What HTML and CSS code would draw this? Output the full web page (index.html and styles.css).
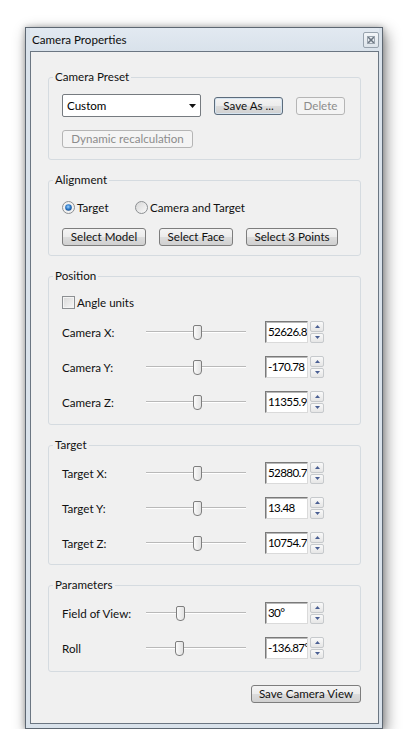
FILE: index.html
```html
<!DOCTYPE html>
<html>
<head>
<meta charset="utf-8">
<title>Camera Properties</title>
<link rel="stylesheet" href="styles.css">
</head>
<body>
<div class="window">
  <div class="titlebar">
    <span class="title">Camera Properties</span>
    <span class="close">
      <svg width="8" height="8" viewBox="0 0 8 8"><path d="M1 1 L7 7 M7 1 L1 7" stroke="#6b7682" stroke-width="1.6" fill="none"/><rect x="0.5" y="0.5" width="7" height="7" fill="none" stroke="#9aa4ae" stroke-width="1"/></svg>
    </span>
  </div>
  <div class="client">
    <fieldset class="group g-preset">
      <legend>Camera Preset</legend>
      <div class="preset-row">
        <div class="combo">
          <span>Custom</span>
          <svg class="combo-arrow" width="7" height="4" viewBox="0 0 7 4"><path d="M0 0 H7 L3.5 4 Z" fill="#111"/></svg>
        </div>
        <button class="btn btn-default w-saveas">Save As ...</button>
        <button class="btn w-delete" disabled>Delete</button>
      </div>
      <button class="btn w-dyn" disabled>Dynamic recalculation</button>
    </fieldset>

    <fieldset class="group g-align">
      <legend>Alignment</legend>
      <div class="radio-row">
        <label class="radio radio-first">
          <svg width="13" height="13" viewBox="0 0 13 13"><defs><radialGradient id="rb" cx="0.45" cy="0.4" r="0.6"><stop offset="0" stop-color="#9fd3ff"/><stop offset="0.6" stop-color="#2a78c8"/><stop offset="1" stop-color="#1b4f8c"/></radialGradient></defs><circle cx="6.5" cy="6.5" r="6" fill="#f1f1f1" stroke="#8c8f92"/><circle cx="6.5" cy="6.5" r="3.3" fill="url(#rb)"/></svg>
          <span>Target</span>
        </label>
        <label class="radio">
          <svg width="13" height="13" viewBox="0 0 13 13"><defs><linearGradient id="ru" x1="0" y1="0" x2="1" y2="1"><stop offset="0" stop-color="#d6d6d6"/><stop offset="1" stop-color="#fbfbfb"/></linearGradient></defs><circle cx="6.5" cy="6.5" r="6" fill="url(#ru)" stroke="#8c8f92"/></svg>
          <span>Camera and Target</span>
        </label>
      </div>
      <div class="btn-row">
        <button class="btn w-model">Select Model</button>
        <button class="btn w-face">Select Face</button>
        <button class="btn w-points">Select 3 Points</button>
      </div>
    </fieldset>

    <fieldset class="group g-pos">
      <legend>Position</legend>
      <label class="check">
        <span class="box"></span>
        <span>Angle units</span>
      </label>
      <div class="rows">
        <div class="row">
          <span class="lbl">Camera X:</span>
          <div class="slider"><span class="track"></span><span class="thumb" style="left:47px"></span></div>
          <div class="num">52626.8</div>
          <div class="spin"><span class="up"><svg width="5" height="3" viewBox="0 0 5 3"><path d="M0 3 L2.5 0 L5 3Z" fill="#4a5f93"/></svg></span><span class="down"><svg width="5" height="3" viewBox="0 0 5 3"><path d="M0 0 L5 0 L2.5 3Z" fill="#4a5f93"/></svg></span></div>
        </div>
        <div class="row">
          <span class="lbl">Camera Y:</span>
          <div class="slider"><span class="track"></span><span class="thumb" style="left:47px"></span></div>
          <div class="num">-170.78</div>
          <div class="spin"><span class="up"><svg width="5" height="3" viewBox="0 0 5 3"><path d="M0 3 L2.5 0 L5 3Z" fill="#4a5f93"/></svg></span><span class="down"><svg width="5" height="3" viewBox="0 0 5 3"><path d="M0 0 L5 0 L2.5 3Z" fill="#4a5f93"/></svg></span></div>
        </div>
        <div class="row">
          <span class="lbl">Camera Z:</span>
          <div class="slider"><span class="track"></span><span class="thumb" style="left:47px"></span></div>
          <div class="num">11355.93</div>
          <div class="spin"><span class="up"><svg width="5" height="3" viewBox="0 0 5 3"><path d="M0 3 L2.5 0 L5 3Z" fill="#4a5f93"/></svg></span><span class="down"><svg width="5" height="3" viewBox="0 0 5 3"><path d="M0 0 L5 0 L2.5 3Z" fill="#4a5f93"/></svg></span></div>
        </div>
      </div>
    </fieldset>

    <fieldset class="group g-target">
      <legend>Target</legend>
      <div class="rows">
        <div class="row">
          <span class="lbl">Target X:</span>
          <div class="slider"><span class="track"></span><span class="thumb" style="left:47px"></span></div>
          <div class="num">52880.71</div>
          <div class="spin"><span class="up"><svg width="5" height="3" viewBox="0 0 5 3"><path d="M0 3 L2.5 0 L5 3Z" fill="#4a5f93"/></svg></span><span class="down"><svg width="5" height="3" viewBox="0 0 5 3"><path d="M0 0 L5 0 L2.5 3Z" fill="#4a5f93"/></svg></span></div>
        </div>
        <div class="row">
          <span class="lbl">Target Y:</span>
          <div class="slider"><span class="track"></span><span class="thumb" style="left:47px"></span></div>
          <div class="num">13.48</div>
          <div class="spin"><span class="up"><svg width="5" height="3" viewBox="0 0 5 3"><path d="M0 3 L2.5 0 L5 3Z" fill="#4a5f93"/></svg></span><span class="down"><svg width="5" height="3" viewBox="0 0 5 3"><path d="M0 0 L5 0 L2.5 3Z" fill="#4a5f93"/></svg></span></div>
        </div>
        <div class="row">
          <span class="lbl">Target Z:</span>
          <div class="slider"><span class="track"></span><span class="thumb" style="left:47px"></span></div>
          <div class="num">10754.75</div>
          <div class="spin"><span class="up"><svg width="5" height="3" viewBox="0 0 5 3"><path d="M0 3 L2.5 0 L5 3Z" fill="#4a5f93"/></svg></span><span class="down"><svg width="5" height="3" viewBox="0 0 5 3"><path d="M0 0 L5 0 L2.5 3Z" fill="#4a5f93"/></svg></span></div>
        </div>
      </div>
    </fieldset>

    <fieldset class="group g-params">
      <legend>Parameters</legend>
      <div class="rows">
        <div class="row">
          <span class="lbl">Field of View:</span>
          <div class="slider"><span class="track"></span><span class="thumb" style="left:30px"></span></div>
          <div class="num">30°</div>
          <div class="spin"><span class="up"><svg width="5" height="3" viewBox="0 0 5 3"><path d="M0 3 L2.5 0 L5 3Z" fill="#4a5f93"/></svg></span><span class="down"><svg width="5" height="3" viewBox="0 0 5 3"><path d="M0 0 L5 0 L2.5 3Z" fill="#4a5f93"/></svg></span></div>
        </div>
        <div class="row">
          <span class="lbl">Roll</span>
          <div class="slider"><span class="track"></span><span class="thumb" style="left:29px"></span></div>
          <div class="num">-136.87°</div>
          <div class="spin"><span class="up"><svg width="5" height="3" viewBox="0 0 5 3"><path d="M0 3 L2.5 0 L5 3Z" fill="#4a5f93"/></svg></span><span class="down"><svg width="5" height="3" viewBox="0 0 5 3"><path d="M0 0 L5 0 L2.5 3Z" fill="#4a5f93"/></svg></span></div>
        </div>
      </div>
    </fieldset>

    <div class="footer">
      <button class="btn w-savecam">Save Camera View</button>
    </div>
  </div>
</div>
</body>
</html>
```

FILE: styles.css
```css
* { box-sizing: border-box; }
html, body { margin: 0; padding: 0; background: #ffffff; }
body {
  font-family: Lato, "Open Sans", "DejaVu Sans", sans-serif;
  font-size: 11.6px;
  color: #111;
}
.window {
  margin: 27px 0 0 25px;
  width: 358px;
  height: 702px;
  border: 1px solid #5d6772;
  background: #d9e2eb;
  padding: 0 3px 4px 4px;
  display: flex;
  flex-direction: column;
  box-shadow: 3px 5px 14px rgba(0,0,0,0.45), 0 0 6px rgba(0,0,0,0.25);
}
.titlebar {
  height: 23px;
  display: flex;
  align-items: center;
  justify-content: space-between;
  padding: 0 0 0 2px;
  background: linear-gradient(#e2e9f1, #d9e2eb);
}
.title { font-size: 11.6px; color: #0c0c0c; }
.close {
  width: 16px;
  height: 16px;
  border: 1px solid #98a3ae;
  border-radius: 2px;
  background: linear-gradient(#f3f6f9, #dde4eb);
  display: flex;
  align-items: center;
  justify-content: center;
}
.close svg { display: block; }
.client {
  flex: 1;
  background: #f0f0f0;
  border: 1px solid #6b7682;
  padding: 18px 17px 0 17px;
}
.group {
  margin: 0 0 13px 0;
  padding: 10px 12px 11px 13px;
  border: 1px solid #d5dbe0;
  border-radius: 3px;
  min-width: 0;
}
.group legend {
  padding: 0 2px;
  margin-left: -9px;
  font-size: 11.6px;
  line-height: 14px;
  color: #111;
}
.g-align { padding-top: 12px; padding-bottom: 9px; }
.g-pos { padding-top: 11px; padding-bottom: 11px; }
.g-target { padding-top: 10px; padding-bottom: 10px; }
.g-params { padding-top: 10px; padding-bottom: 12px; margin-bottom: 13px; }

.preset-row {
  display: flex;
  align-items: center;
  gap: 13px;
  height: 23px;
  margin-bottom: 13px;
}
.combo {
  width: 139px;
  height: 23px;
  background: #fff;
  border: 1px solid #767b80;
  border-radius: 2px;
  display: flex;
  align-items: center;
  justify-content: space-between;
  padding: 0 4px 0 4px;
  color: #000;
}
.combo-arrow { display: block; margin-top: 1px; }

.btn {
  font-family: inherit;
  font-size: 11.6px;
  color: #111;
  height: 18px;
  padding: 0;
  margin: 0;
  border: 1px solid #7d7d7d;
  border-radius: 3px;
  background: linear-gradient(#f4f4f4 0%, #ececec 48%, #dcdcdc 52%, #d0d0d0 100%);
  display: flex;
  align-items: center;
  justify-content: center;
  line-height: 16px;
}
.btn-default { border-color: #5c6c7c; box-shadow: inset 0 0 0 1px #d6e4f0; }
.btn:disabled {
  color: #8c8c8c;
  border-color: #b5b5b5;
  background: #f4f4f4;
}
.w-saveas { width: 69px; }
.w-delete { width: 49px; }
.w-dyn { width: 131px; }
.w-model { width: 84px; }
.w-face { width: 74px; }
.w-points { width: 92px; }
.w-savecam { width: 110px; }

.radio-row {
  display: flex;
  align-items: center;
  height: 16px;
  margin-bottom: 13px;
}
.radio { display: flex; align-items: center; gap: 2px; }
.radio svg { display: block; }
.radio-first { width: 73px; }
.btn-row { display: flex; gap: 13px; }

.check {
  display: flex;
  align-items: center;
  gap: 2px;
  height: 16px;
  margin-bottom: 11px;
}
.check .box {
  width: 13px;
  height: 13px;
  border: 1px solid #8c8f92;
  background: linear-gradient(135deg, #d8d8d8, #f7f7f7);
  box-shadow: inset 0 0 0 1px #f4f4f4;
}

.rows { display: flex; flex-direction: column; gap: 13px; }
.row {
  display: flex;
  align-items: center;
  height: 22px;
}
.lbl { width: 84px; color: #111; }
.slider {
  position: relative;
  width: 100px;
  height: 22px;
}
.track {
  position: absolute;
  left: 0;
  right: 0;
  top: 10px;
  height: 2px;
  border-top: 1px solid #b9b9b9;
  border-bottom: 1px solid #ffffff;
}
.thumb {
  position: absolute;
  top: 4px;
  width: 9px;
  height: 15px;
  border: 1px solid #7e7e7e;
  border-radius: 2px 2px 4px 4px;
  background: linear-gradient(90deg, #fafafa, #e2e2e2);
}
.num {
  margin-left: 19px;
  width: 43px;
  height: 22px;
  background: #fff;
  border-top: 1px solid #7a7a7a;
  border-left: 1px solid #7a7a7a;
  border-right: 1px solid #dadada;
  border-bottom: 1px solid #dadada;
  box-shadow: inset 1px 1px 0 #b8b8b8;
  padding: 0 0 0 2px;
  line-height: 20px;
  letter-spacing: -0.6px;
  white-space: nowrap;
  overflow: hidden;
  color: #000;
}
.spin {
  margin-left: 2px;
  width: 14px;
  height: 22px;
  display: flex;
  flex-direction: column;
  gap: 1px;
}
.spin span {
  flex: 1;
  border: 1px solid #c6c9cc;
  border-radius: 2px;
  background: linear-gradient(#f9f9f9, #e6e6e6);
  display: flex;
  align-items: center;
  justify-content: center;
}
.spin svg { display: block; }

.footer {
  display: flex;
  justify-content: flex-end;
}
```
